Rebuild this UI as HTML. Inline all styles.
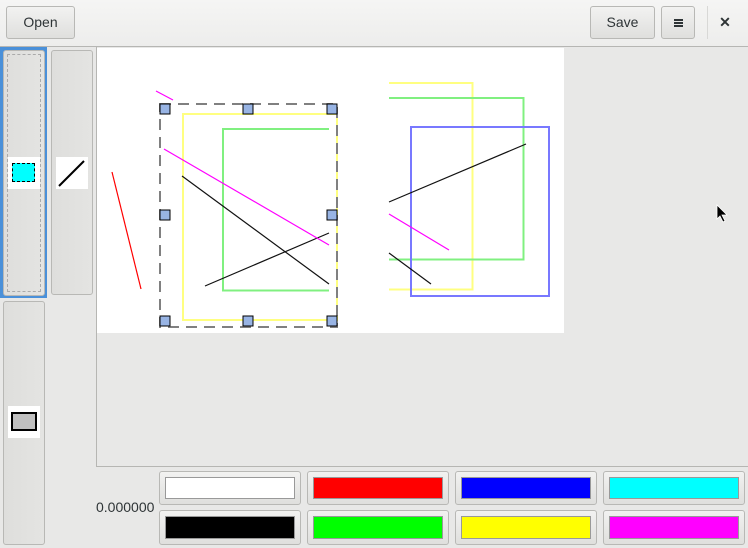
<!DOCTYPE html>
<html><head><style>
body{margin:0;width:748px;height:548px;background:#e8e8e7;font-family:"Liberation Sans",sans-serif;position:relative;overflow:hidden}
.hb{position:absolute;left:0;top:0;width:748px;height:46px;background:linear-gradient(#f5f5f4,#ededec);border-bottom:1px solid #b6b6b3}
.btn{position:absolute;border:1px solid #b8b8b5;border-radius:3px;background:linear-gradient(#f2f2f1,#dfdfdd);box-sizing:border-box;color:#2e3436;font-size:14px;text-align:center}
.tb{position:absolute;border:1px solid #b8b8b5;border-radius:3px;background:linear-gradient(90deg,#dededc,#e4e4e2);box-sizing:border-box}
.sw{position:absolute;top:5px;left:5px;right:5px;bottom:5px;border:1px solid #999}
</style></head><body>
<div class="hb">
<div class="btn" style="left:6px;top:6px;width:69px;height:33px;line-height:31px">Open</div>
<div class="btn" style="left:590px;top:6px;width:65px;height:33px;line-height:31px">Save</div>
<div class="btn" style="left:661px;top:6px;width:34px;height:33px"><div style="position:absolute;left:12px;top:12px;width:9px;height:2px;background:#2e3436;box-shadow:0 3px 0 #2e3436,0 6px 0 #2e3436"></div></div>
<div style="position:absolute;left:707px;top:6px;width:1px;height:33px;background:#d8d8d6"></div>
<div style="position:absolute;left:713px;top:6px;width:24px;height:33px;line-height:33px;text-align:center;font-size:14px;font-weight:bold;color:#2e3436">✕</div>
</div>
<div style="position:absolute;left:0;top:47px;width:47px;height:251px;background:#4a90d9"></div>
<div class="tb" style="left:3px;top:50px;width:42px;height:246px"><div style="position:absolute;left:3px;top:3px;right:3px;bottom:3px;border:1px dashed #aaa"></div>
<div style="position:absolute;left:4px;top:106px;width:32px;height:32px;background:#fff"><div style="position:absolute;left:4px;top:6px;width:21px;height:17px;background:#0ff;border:1px dashed #000"></div></div></div>
<div class="tb" style="left:51px;top:50px;width:42px;height:245px"><svg style="position:absolute;left:4px;top:106px" width="32" height="32"><rect width="32" height="32" fill="#fff"/><line x1="3" y1="29" x2="28" y2="4" stroke="#000" stroke-width="2"/></svg></div>
<div class="tb" style="left:3px;top:301px;width:42px;height:244px"><div style="position:absolute;left:4px;top:104px;width:32px;height:32px;background:#fff"><div style="position:absolute;left:3px;top:6px;width:22px;height:15px;background:#c0c0c0;border:2px solid #000"></div></div></div>
<div style="position:absolute;left:96px;top:47px;width:652px;height:420px;border-left:1px solid #b6b6b3;border-bottom:1px solid #b6b6b3;box-sizing:border-box;background:#e8e8e7"></div>
<svg style="position:absolute;left:0;top:0" width="748" height="548">
<rect x="97" y="48" width="467" height="285" fill="#fff"/>
<g fill="none" stroke-width="2">
<rect x="183" y="114" width="154" height="206" stroke="#ffff80"/>
<polyline points="329,129 223,129 223,290.5 329,290.5" stroke="#80f080"/>
<polyline points="389,83 472.5,83 472.5,289.5 389,289.5" stroke="#ffff80"/>
<polyline points="389,98 523.5,98 523.5,259.5 389,259.5" stroke="#80f080"/>
<rect x="411" y="127" width="138" height="169" stroke="#7878ff"/>
</g>
<g stroke-width="1.2">
<line x1="182" y1="176" x2="329" y2="284" stroke="#111"/>
<line x1="205" y1="286" x2="329" y2="233" stroke="#111"/>
<line x1="164" y1="149" x2="329" y2="245" stroke="#f0f"/>
<line x1="156" y1="91" x2="173" y2="100" stroke="#f0f"/>
<line x1="112" y1="172" x2="141" y2="289" stroke="#f00"/>
<line x1="389" y1="202" x2="526" y2="144" stroke="#111"/>
<line x1="389" y1="214" x2="449" y2="250" stroke="#f0f"/>
<line x1="389" y1="253" x2="431" y2="284" stroke="#111"/>
</g>
<rect x="160" y="104" width="177" height="223" fill="none" stroke="#808080" stroke-width="2" stroke-dasharray="11,7"/>
<g fill="#98b4e4" stroke="#000" stroke-width="1">
<rect x="160" y="104" width="10" height="10"/><rect x="243" y="104" width="10" height="10"/><rect x="327" y="104" width="10" height="10"/>
<rect x="160" y="210" width="10" height="10"/><rect x="327" y="210" width="10" height="10"/>
<rect x="160" y="316" width="10" height="10"/><rect x="243" y="316" width="10" height="10"/><rect x="327" y="316" width="10" height="10"/>
</g>
<path d="M717 205 L717 219 L720 216 L723 222 L725 221 L722 215 L727 215 Z" fill="#000" stroke="#fff" stroke-width="0.8"/>
</svg>
<div style="position:absolute;left:96px;top:499px;font-size:14px;color:#2e3436">0.000000</div>
<div class="btn" style="left:159px;top:471px;width:142px;height:34px"><div class="sw" style="background:#fff"></div></div>
<div class="btn" style="left:307px;top:471px;width:142px;height:34px"><div class="sw" style="background:#f00"></div></div>
<div class="btn" style="left:455px;top:471px;width:142px;height:34px"><div class="sw" style="background:#00f"></div></div>
<div class="btn" style="left:603px;top:471px;width:142px;height:34px"><div class="sw" style="background:#0ff"></div></div>
<div class="btn" style="left:159px;top:510px;width:142px;height:35px"><div class="sw" style="background:#000"></div></div>
<div class="btn" style="left:307px;top:510px;width:142px;height:35px"><div class="sw" style="background:#0f0"></div></div>
<div class="btn" style="left:455px;top:510px;width:142px;height:35px"><div class="sw" style="background:#ff0"></div></div>
<div class="btn" style="left:603px;top:510px;width:142px;height:35px"><div class="sw" style="background:#f0f"></div></div>
</body></html>
